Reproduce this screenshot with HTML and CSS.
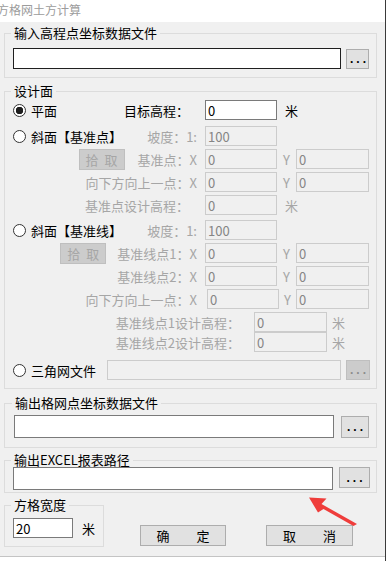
FILE: index.html
```html
<!DOCTYPE html>
<html lang="zh-CN">
<head>
  <meta charset="UTF-8" />
  <meta name="viewport" content="width=device-width, initial-scale=1" />
  <title>方格网土方计算</title>
  <link rel="stylesheet" href="styles.css">
</head>
<body>
  <div class="window">
    <div class="titlebar">方格网土方计算</div>

    <div class="dialog">
      <fieldset class="group group-in">
        <legend>输入高程点坐标数据文件</legend>
        <div class="file-row">
          <input class="field path" type="text" value="">
          <button class="browse">...</button>
        </div>
      </fieldset>

      <fieldset class="group group-design">
        <legend>设计面</legend>

        <div class="row">
          <div class="lead">
            <label class="opt"><input type="radio" name="plane" checked>平面</label>
            <span class="label label-colon">目标高程：</span>
          </div>
          <input class="field num" type="text" value="0">
          <span class="unit unit-meter">米</span>
        </div>

        <div class="section section-point">
          <div class="row">
            <div class="lead">
              <label class="opt"><input type="radio" name="plane">斜面【基准点】</label>
              <span class="label off">坡度：1:</span>
            </div>
            <input class="field num" type="text" value="100" disabled>
          </div>
          <div class="row">
            <div class="lead">
              <button class="pick" disabled>拾 取</button>
              <span class="label off">基准点：X</span>
            </div>
            <input class="field num" type="text" value="0" disabled>
            <span class="unit off">Y</span>
            <input class="field num num-y" type="text" value="0" disabled>
          </div>
          <div class="row">
            <div class="lead">
              <span class="label off">向下方向上一点：X</span>
            </div>
            <input class="field num" type="text" value="0" disabled>
            <span class="unit off">Y</span>
            <input class="field num num-y" type="text" value="0" disabled>
          </div>
          <div class="row">
            <div class="lead">
              <span class="label label-colon off">基准点设计高程：</span>
            </div>
            <input class="field num" type="text" value="0" disabled>
            <span class="unit unit-meter off">米</span>
          </div>
        </div>

        <div class="section section-line">
          <div class="row">
            <div class="lead">
              <label class="opt"><input type="radio" name="plane">斜面【基准线】</label>
              <span class="label off">坡度：1:</span>
            </div>
            <input class="field num" type="text" value="100" disabled>
          </div>
          <div class="row">
            <div class="lead">
              <button class="pick pick-line" disabled>拾 取</button>
              <span class="label off">基准线点1：X</span>
            </div>
            <input class="field num" type="text" value="0" disabled>
            <span class="unit off">Y</span>
            <input class="field num num-y" type="text" value="0" disabled>
          </div>
          <div class="row">
            <div class="lead">
              <span class="label off">基准线点2：X</span>
            </div>
            <input class="field num" type="text" value="0" disabled>
            <span class="unit off">Y</span>
            <input class="field num num-y" type="text" value="0" disabled>
          </div>
          <div class="row">
            <div class="lead">
              <span class="label off">向下方向上一点：X</span>
            </div>
            <input class="field num num-shift" type="text" value="0" disabled>
            <span class="unit unit-narrow off">Y</span>
            <input class="field num num-y" type="text" value="0" disabled>
          </div>
          <div class="pair">
            <div class="row">
              <div class="lead lead-wide">
                <span class="label off">基准线点1设计高程：</span>
              </div>
              <input class="field num num-y" type="text" value="0" disabled>
              <span class="unit unit-tight off">米</span>
            </div>
            <div class="row">
              <div class="lead lead-wide">
                <span class="label off">基准线点2设计高程：</span>
              </div>
              <input class="field num num-y" type="text" value="0" disabled>
              <span class="unit unit-tight off">米</span>
            </div>
          </div>
        </div>

        <div class="row row-tin">
          <div class="lead lead-tin">
            <label class="opt"><input type="radio" name="plane">三角网文件</label>
          </div>
          <input class="field tin-path" type="text" value="" disabled>
          <button class="browse" disabled>...</button>
        </div>
      </fieldset>

      <fieldset class="group group-grid">
        <legend>输出格网点坐标数据文件</legend>
        <div class="file-row">
          <input class="field path" type="text" value="">
          <button class="browse">...</button>
        </div>
      </fieldset>

      <fieldset class="group group-excel">
        <legend>输出EXCEL报表路径</legend>
        <div class="file-row">
          <input class="field path" type="text" value="">
          <button class="browse">...</button>
        </div>
      </fieldset>

      <div class="footer">
        <fieldset class="group group-size">
          <legend>方格宽度</legend>
          <div class="size-row">
            <input class="field size" type="text" value="20">
            <span class="size-unit">米</span>
          </div>
        </fieldset>
        <button class="btn btn-ok">确 定</button>
        <button class="btn btn-cancel">取 消</button>
      </div>
    </div>

    <!-- red annotation arrow pointing at the excel path box -->
    <svg class="pointer" width="62" height="40" viewBox="300 490 62 40">
      <polygon points="309,497.5 326.5,498.5 321.5,504 357,524 353.5,526 323.5,509 318,512.5" fill="#ef3d3b" />
    </svg>
  </div>
</body>
</html>
```

FILE: styles.css
```css
body {
  margin: 0;
  background: #fff;
  font-family: "Noto Sans CJK SC", "Noto Sans", sans-serif;
  font-size: 13px;
  color: #000;
}

.window {
  position: relative;
  width: 385px;
  height: 561px;
  border-right: 1px solid #3a3a3a;
  overflow: hidden;
}

.titlebar {
  height: 22px;
  line-height: 20px;
  font-size: 12px;
  color: #9c9c9c;
  text-indent: -3px;
  white-space: nowrap;
}

.dialog {
  background: #f0f0f0;
  padding: 3px 8px 9px 4px;
  border-bottom: 1px solid #c4c4c4;
}

/* group boxes */
.group {
  margin: 0;
  padding: 0 0 0 8px;
  border: 1px solid #dcdcdc;
  min-width: 0;
}

.group legend {
  padding: 0 3px;
  margin-left: -2px;
  line-height: 16px;
  font-size: 13px;
}

.group-in {
  padding-top: 7px;
  padding-bottom: 8px;
}

.group-design {
  margin-top: 5px;
  padding-top: 1px;
  padding-bottom: 8px;
}

.group-grid {
  margin-top: 6px;
  padding: 4px 0 9px 9px;
}

.group-excel {
  margin-top: 4px;
  padding-top: 0;
  padding-bottom: 2px;
}

/* inputs & buttons */
.field {
  box-sizing: border-box;
  height: 20px;
  margin: 0;
  padding: 0 2px;
  border: 1px solid #7a7a7a;
  background: #fff;
  font: 13px "Noto Sans CJK SC", sans-serif;
  color: #000;
  outline: none;
}

.field:disabled {
  border-color: #cccccc;
  background: #f0f0f0;
  color: #858585;
}

.browse {
  box-sizing: border-box;
  margin: 0;
  padding: 0 0 0 3px;
  border: 1px solid #adadad;
  background: #e1e1e1;
  font: bold 12px "Liberation Sans", sans-serif;
  letter-spacing: 3px;
  color: #000;
}

.browse:disabled {
  border-color: #bfbfbf;
  background: #cccccc;
  color: #8c8c8c;
}

.file-row {
  display: flex;
  align-items: center;
}

.group-in .path {
  width: 328px;
  height: 21px;
  border-color: #1f1f1f;
}

.group-in .browse {
  margin-left: 5px;
  width: 23px;
  height: 20px;
}

.group-grid .path,
.group-excel .path {
  width: 320px;
  height: 23px;
}

.group-grid .browse {
  margin-left: 7px;
  width: 28px;
  height: 22px;
}

.group-excel .file-row {
  margin-top: -1px;
  align-items: flex-start;
}

.group-excel .browse {
  margin-left: 6px;
  width: 31px;
  height: 21px;
}

/* design plane rows */
.section {
  display: flex;
  flex-direction: column;
  gap: 3px;
}

.section-point {
  margin-top: 6px;
}

.section-line {
  margin-top: 5px;
}

.row {
  display: flex;
  align-items: center;
  height: 20px;
}

.row-tin {
  margin-top: 8px;
}

.lead {
  flex: none;
  box-sizing: border-box;
  width: 192px;
  padding-right: 8px;
  display: flex;
  align-items: center;
  justify-content: flex-end;
  white-space: nowrap;
}

.lead-wide {
  width: 241px;
  padding-right: 14px;
}

.lead-tin {
  width: 94px;
  padding-right: 0;
  justify-content: flex-start;
}

.opt {
  margin-right: auto;
  display: flex;
  align-items: center;
  gap: 5px;
}

.opt input {
  appearance: none;
  -webkit-appearance: none;
  box-sizing: border-box;
  width: 13px;
  height: 13px;
  margin: 0;
  border: 1px solid #333;
  border-radius: 50%;
  background: #fff;
}

.opt input:checked {
  background: radial-gradient(circle, #1e1e1e 0 3.5px, #fff 4px);
}

.label-colon {
  margin-right: 8px;
}

.off {
  color: #a6a6a6;
}

.num {
  width: 72px;
}

.num-y {
  width: 73px;
}

.num-shift {
  margin-left: 2px;
}

.unit {
  width: 19px;
  text-align: center;
}

.unit-narrow {
  width: 17px;
}

.unit-meter {
  width: auto;
  padding-left: 8px;
}

.unit-tight {
  width: auto;
  padding-left: 5px;
}

.pick {
  box-sizing: border-box;
  width: 46px;
  height: 21px;
  margin: 0 13px 0 0;
  padding: 0;
  border: 1px solid #bfbfbf;
  background: #cccccc;
  color: #a6a6a6;
  font: 13px "Noto Sans CJK SC", sans-serif;
  word-spacing: 3px;
}

.pick-line {
  margin-right: 11px;
}

.tin-path {
  width: 234px;
}

.row-tin .browse {
  margin-left: 5px;
  width: 24px;
  height: 20px;
}

/* bottom area */
.footer {
  display: flex;
  align-items: flex-end;
  margin-top: 4px;
}

.group-size {
  box-sizing: border-box;
  width: 100px;
  padding-top: 5px;
  padding-bottom: 8px;
}

.size-row {
  display: flex;
  align-items: center;
}

.size {
  width: 60px;
}

.size-unit {
  margin-left: 9px;
}

.btn {
  box-sizing: border-box;
  width: 86px;
  height: 21px;
  margin: 0 0 1px 36px;
  padding: 0;
  border: 1px solid #adadad;
  background: #e1e1e1;
  color: #000;
  font: 13px "Noto Sans CJK SC", sans-serif;
  word-spacing: 24px;
}

.btn-cancel {
  width: 87px;
  margin-left: 40px;
}

.pointer {
  position: absolute;
  left: 300px;
  top: 490px;
}
```
